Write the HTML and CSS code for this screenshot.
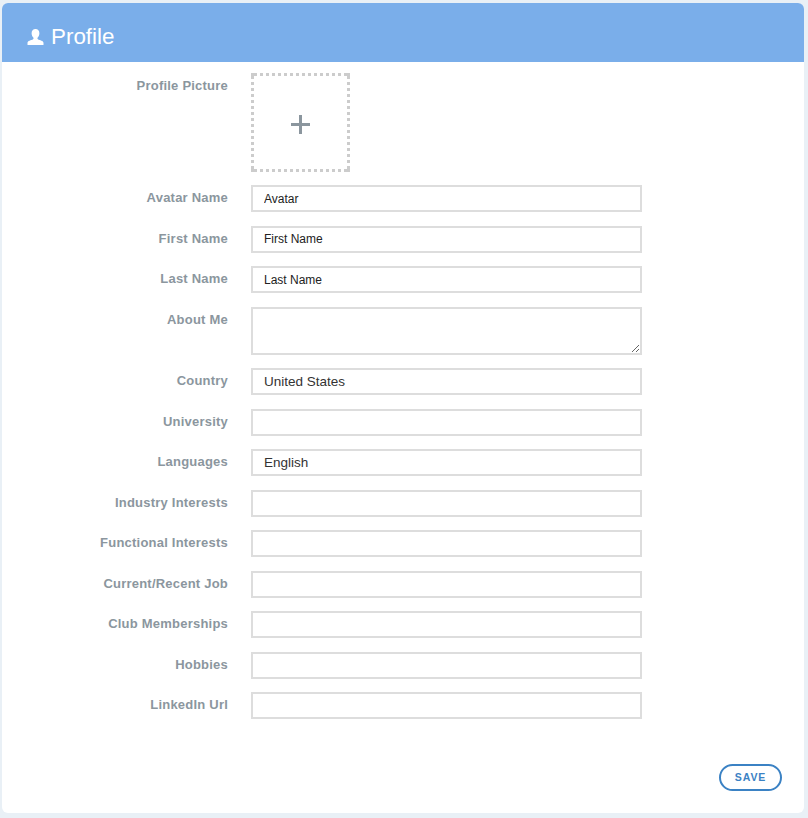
FILE: index.html
```html
<!DOCTYPE html>
<html lang="en">
<head>
<meta charset="utf-8">
<title>Profile</title>
<link rel="stylesheet" href="styles.css">
</head>
<body>
<main class="card">
  <header class="card-head">
    <svg class="head-icon" viewBox="0 0 17 16" width="17" height="16" aria-hidden="true"><path d="M8.500 0c2.500 0 3.900 1.900 3.900 4.300 0 1.800-.8 3.300-1.700 4.300-.4.500-.4 1.200.2 1.600 1.900 1.100 5.600 1.500 5.600 3.600V16H.5v-2.200c0-2.100 3.700-2.500 5.600-3.600.6-.4.6-1.100.2-1.600C5.400 7.600 4.600 6.100 4.600 4.300 4.600 1.900 6 0 8.500 0z" fill="#fff"/></svg>
    <h1 class="card-title">Profile</h1>
  </header>
  <form class="form">
    <div class="row">
      <label class="label">Profile Picture</label>
      <div class="picture"><svg class="plus" viewBox="0 0 19 19" width="19" height="19" aria-hidden="true"><path d="M8 0h3v8h8v3h-8v8H8v-8H0V8h8z" fill="#8b969e"/></svg></div>
    </div>
    <div class="row"><label class="label">Avatar Name</label><input class="field" value="Avatar"></div>
    <div class="row"><label class="label">First Name</label><input class="field" value="First Name"></div>
    <div class="row"><label class="label">Last Name</label><input class="field" value="Last Name"></div>
    <div class="row"><label class="label">About Me</label><textarea class="field area"></textarea></div>
    <div class="row"><label class="label">Country</label><input class="field wide" value="United States"></div>
    <div class="row"><label class="label">University</label><input class="field"></div>
    <div class="row"><label class="label">Languages</label><input class="field wide" value="English"></div>
    <div class="row"><label class="label">Industry Interests</label><input class="field"></div>
    <div class="row"><label class="label">Functional Interests</label><input class="field"></div>
    <div class="row"><label class="label">Current/Recent Job</label><input class="field"></div>
    <div class="row"><label class="label">Club Memberships</label><input class="field"></div>
    <div class="row"><label class="label">Hobbies</label><input class="field"></div>
    <div class="row"><label class="label">LinkedIn Url</label><input class="field"></div>
  </form>
  <div class="actions"><button class="save" type="button">SAVE</button></div>
</main>
</body>
</html>
```
FILE: styles.css
```css
html, body { margin: 0; padding: 0; }
body { background: #e9f0f6; font-family: "Liberation Sans", Arial, sans-serif; height: 818px; overflow: hidden; }
.card { margin: 3px 4px 0 2px; height: 810px; background: #fff; border-radius: 6px; display: flex; flex-direction: column; overflow: hidden; }
.card-head { height: 59px; background: #7aaeea; display: flex; align-items: center; padding-left: 25px; gap: 7px; box-sizing: border-box; padding-top: 8px; }
.head-icon { display: block; }
.card-title { margin: 0; font-size: 22.4px; font-weight: 400; color: #fff; line-height: 26px; }
.form { display: flex; flex-direction: column; gap: 13.5px; padding-top: 10.9px; }
.row { display: flex; gap: 23px; align-items: flex-start; }
.label { width: 226px; text-align: right; font-size: 13px; font-weight: 700; color: #8b969e; line-height: 25px; letter-spacing: 0.22px; }
.picture {
  width: 99px;
  height: 99px;
  display: flex;
  align-items: center;
  justify-content: center;
  padding-top: 4px;
  box-sizing: border-box;
  background:
    linear-gradient(#ccc, #ccc) 0 0 / 3px 3px no-repeat,
    linear-gradient(#ccc, #ccc) 100% 0 / 3px 3px no-repeat,
    linear-gradient(#ccc, #ccc) 0 100% / 3px 3px no-repeat,
    linear-gradient(#ccc, #ccc) 100% 100% / 3px 3px no-repeat,
    linear-gradient(90deg, #ccc 3px, transparent 3px) 3px 0 / 6px 3px repeat-x,
    linear-gradient(90deg, #ccc 3px, transparent 3px) 3px 100% / 6px 3px repeat-x,
    linear-gradient(#ccc 3px, transparent 3px) 0 3px / 3px 6px repeat-y,
    linear-gradient(#ccc 3px, transparent 3px) 100% 3px / 3px 6px repeat-y;
}
.plus { display: block; }
.field { display: block; width: 391px; height: 27px; box-sizing: border-box; border: 2px solid #ddd; border-radius: 0; background: #fff; padding: 0 11px; margin: 0; font-family: "Liberation Sans", Arial, sans-serif; font-size: 12px; color: #222; outline: none; }
.wide { font-size: 13.5px; color: #333; }
.area { height: 48px; }
.actions { margin-top: auto; display: flex; justify-content: flex-end; padding: 0 22px 22px 0; }
.save { width: 63px; height: 27px; box-sizing: border-box; border: 2px solid #3b82c4; border-radius: 14px; background: #fff; color: #3b82c4; font-family: "Liberation Sans", Arial, sans-serif; font-size: 10.5px; font-weight: 700; letter-spacing: 0.9px; padding: 0 0 2px; }
```
